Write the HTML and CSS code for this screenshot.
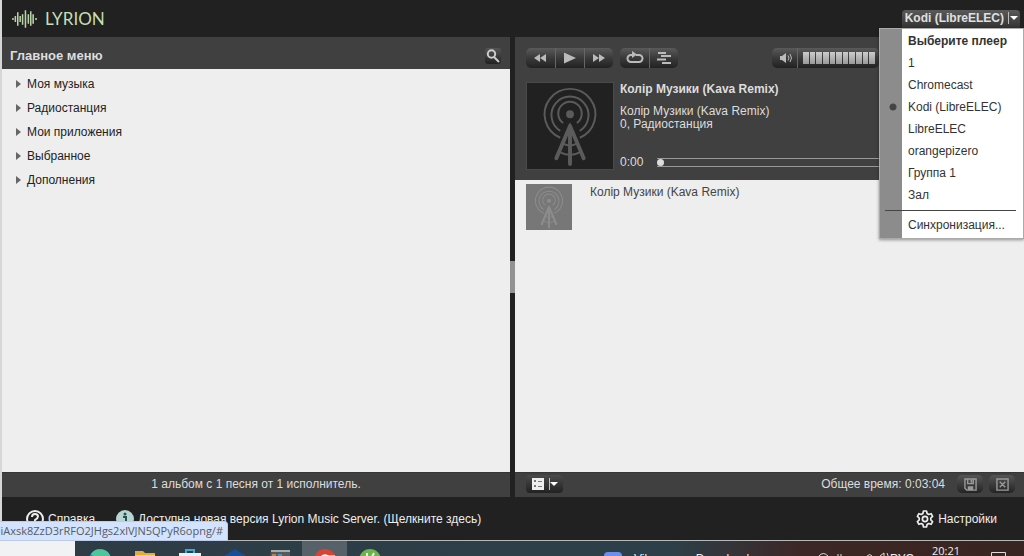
FILE: index.html
```html
<!DOCTYPE html>
<html lang="ru">
<head>
<meta charset="utf-8">
<title>Lyrion Music Server</title>
<link rel="stylesheet" href="styles.css">
</head>
<body>
<svg class="defs" aria-hidden="true">
  <symbol id="tower" viewBox="0 0 88 88">
    <g fill="none" stroke="currentColor">
      <g stroke-width="2">
        <path d="M37 41A12 12 0 1 1 51 41"/>
        <path d="M34 49A19 19 0 1 1 54 49"/>
        <path d="M34 56A26 26 0 1 1 54 56"/>
      </g>
      <path stroke-width="4" stroke-linecap="round" d="M44 44V83M44 44L30 77M44 44L58 77"/>
      <path stroke-width="2" d="M37 62Q44 66 51 62M34 71Q44 76 54 71"/>
    </g>
    <circle cx="44" cy="32" r="4" fill="currentColor"/>
    <path fill="currentColor" d="M44 40l5 13H39z"/>
  </symbol>
</svg>

<div class="app">
  <header class="topbar">
    <a class="brand" href="#">
      <svg class="brand-mark" viewBox="0 0 26 18" aria-hidden="true"><path d="M1 8v2M3.500 6v6M6 2v14M8.500 6v6M11 4v11M14 0v18M17 4v10M19.500 1v15M22 4v10M25 8v2"/></svg>
      <span>LYRION</span>
    </a>
    <div class="player-picker">
      <button class="player-button" type="button" aria-haspopup="true" aria-expanded="true">Kodi (LibreELEC)<span class="caret-box"><span class="caret"></span></span></button>
      <div class="menu" role="menu">
        <strong class="menu-title">Выберите плеер</strong>
        <button type="button" role="menuitem">1</button>
        <button type="button" role="menuitem">Chromecast</button>
        <button type="button" role="menuitem" class="checked">Kodi (LibreELEC)</button>
        <button type="button" role="menuitem">LibreELEC</button>
        <button type="button" role="menuitem">orangepizero</button>
        <button type="button" role="menuitem">Группа 1</button>
        <button type="button" role="menuitem">Зал</button>
        <hr class="menu-rule">
        <button type="button" role="menuitem">Синхронизация...</button>
      </div>
    </div>
  </header>

  <main class="panels">
    <section class="panel library">
      <div class="panel-head">
        <h1>Главное меню</h1>
        <button class="search-button" type="button" aria-label="Поиск"><svg viewBox="0 0 16 16"><circle cx="6.500" cy="6" r="3.700"/><path d="M9 9l5 5"/></svg></button>
      </div>
      <nav class="tree">
        <a href="#">Моя музыка</a>
        <a href="#">Радиостанция</a>
        <a href="#">Мои приложения</a>
        <a href="#">Выбранное</a>
        <a href="#">Дополнения</a>
      </nav>
      <div class="panel-foot summary">1 альбом с 1 песня от 1 исполнитель.</div>
    </section>

    <div class="splitter"><span class="grip"></span></div>

    <section class="panel player">
      <div class="now-playing">
        <div class="controls">
          <div class="group">
            <button type="button" aria-label="Назад"><svg viewBox="0 0 16 16"><path d="M7 4v8L1 8zM13 4v8L7 8z"/></svg></button>
            <button type="button" aria-label="Играть"><svg viewBox="0 0 16 16"><path d="M2 2.500L14 8 2 13.500z"/></svg></button>
            <button type="button" aria-label="Вперёд"><svg viewBox="0 0 16 16"><path d="M2 4v8l6-4zM8 4v8l6-4z"/></svg></button>
          </div>
          <div class="group">
            <button type="button" aria-label="Повтор"><svg class="wide" viewBox="0 0 18 14"><path class="line" d="M6 4H5a3.500 3.500 0 0 0 0 7h8a3.500 3.500 0 0 0 0-7h-3"/><path d="M6 0v7l5-3.500z"/></svg></button>
            <button type="button" aria-label="Случайный порядок"><svg class="wide" viewBox="0 0 18 14"><path class="line" d="M3 2h8M6 5h10M2 8.500h9M7 12h9"/></svg></button>
          </div>
          <div class="group volume">
            <button type="button" aria-label="Звук"><svg viewBox="0 0 16 16"><path d="M3 6h2l4-3v10L5 10H3z"/><path class="thin" d="M11 5.500q2 2.500 0 5M13 4q3 4 0 8"/></svg></button>
            <div class="bars"><i></i><i></i><i></i><i></i><i></i><i></i><i></i><i></i><i></i><i></i><i></i></div>
          </div>
        </div>
        <div class="track">
          <svg class="cover" role="img" aria-label="Обложка"><use href="#tower"/></svg>
          <div class="track-info">
            <h2>Колір Музики (Kava Remix)</h2>
            <p>Колір Музики (Kava Remix)<br>0, Радиостанция</p>
            <div class="progress">
              <span>0:00</span>
              <div class="rail"><span class="knob"></span></div>
            </div>
          </div>
        </div>
      </div>
      <div class="playlist">
        <svg class="thumb" role="img" aria-label="Обложка"><use href="#tower"/></svg>
        <span>Колір Музики (Kava Remix)</span>
      </div>
      <div class="panel-foot tools">
        <button class="view-button" type="button" aria-label="Вид"><svg viewBox="0 0 12 12"><path fill="#eee" d="M0 0h12v12H0z"/><path fill="#777" d="M2 2h2v2H2zM2 7h2v2H2zM6 3h4v1H6zM6 8h4v1H6z"/></svg><span class="caret-box"><span class="caret"></span></span></button>
        <span class="total">Общее время: 0:03:04</span>
        <button class="tool-button" type="button" aria-label="Сохранить"><svg viewBox="0 0 14 14"><path class="frame" d="M1 1h12v12H3L1 11z"/><path class="frame" d="M4 1v5h6V1"/><path class="solid" d="M4 9h6v4H4zM7 2h2v3H7z"/></svg></button>
        <button class="tool-button" type="button" aria-label="Очистить"><svg viewBox="0 0 14 14"><path class="frame" d="M1 1h12v12H1zM4 4l6 6M10 4l-6 6"/></svg></button>
      </div>
    </section>
  </main>

  <footer class="bottombar">
    <a href="#"><svg class="icon" viewBox="0 0 18 18"><circle cx="9" cy="9" r="8" fill="none" stroke="#eee" stroke-width="2"/><path d="M6 7q0-3 3-3t3 2.500Q12 8 9 10v1" fill="none" stroke="#eee" stroke-width="2"/><circle cx="9" cy="13.500" r="1" fill="#eee"/></svg>Справка</a>
    <a href="#"><svg class="icon" viewBox="0 0 18 18"><circle cx="9" cy="9" r="9" fill="#b7d5d2"/><path d="M7 7h3v6h2M6 13.500h6" fill="none" stroke="#26514f" stroke-width="2"/><circle cx="9" cy="4" r="1.500" fill="#26514f"/></svg>Доступна новая версия Lyrion Music Server. (Щелкните здесь)</a>
    <a class="settings" href="#"><svg class="icon" viewBox="0 0 18 18" fill="none" stroke="#eee" stroke-width="1.700" stroke-linejoin="round"><path d="M7.500 1h3l.6 2.500 1.600 1 2.400-.8 1.500 2.600L14.800 8v2l1.800 1.700-1.500 2.600-2.400-.8-1.600 1-.6 2.500h-3l-.6-2.500-1.600-1-2.400.8-1.500-2.600L3.200 10V8L1.400 6.300l1.500-2.600 2.400.8 1.600-1z"/><circle cx="9" cy="9" r="2.600"/></svg>Настройки</a>
    <div class="link-hint">6liAxsk8ZzD3rRFO2JHgs2xlVJN5QPyR6opng/#</div>
  </footer>
</div>

<div class="taskbar">
  <div class="task-search"></div>
  <div class="apps">
    <span class="app-slot"><svg viewBox="0 0 22 22"><circle cx="11" cy="11" r="11" fill="#238dce"/><path d="M2 5a11 11 0 0 1 20 5q-1 4-6 3Q15 6 8 7 4 8 2 5z" fill="#50c59a"/></svg></span>
    <span class="app-slot"><svg viewBox="0 0 22 22"><path d="M1 2h8l2 2h10v16H1z" fill="#e2aa43"/><path d="M1 6h20v14H1z" fill="#f4cf6b"/></svg></span>
    <span class="app-slot"><svg viewBox="0 0 22 22"><path d="M7 5V1h8v4" fill="none" stroke="#40a6d8" stroke-width="2"/><path d="M0 4h22v16H0z" fill="#e9f1f5"/><path d="M7 7h3v3H7zM12 7h3v3h-3z" fill="#2b86c5"/></svg></span>
    <span class="app-slot"><svg viewBox="0 0 22 22"><path d="M11 0l11 7v14H0V7z" fill="#174f96"/></svg></span>
    <span class="app-slot"><svg viewBox="0 0 22 22"><path d="M2 1h19v20H0z" fill="#555b5d"/><path d="M2 1h19v2H2z" fill="#a6abac"/><path d="M3 5h4v2H3z" fill="#b88243"/><path d="M9 5h4v2H9z" fill="#578eb4"/></svg></span>
    <span class="app-slot active"><svg viewBox="0 0 22 22"><circle cx="11" cy="11" r="11" fill="#d94335"/><path d="M11 6h10q2 8-6 12z" fill="#f4be43"/><circle cx="11" cy="11" r="5" fill="#4b82d8" stroke="#fff" stroke-width="1.500"/></svg></span>
    <span class="app-slot"><svg viewBox="0 0 22 22"><circle cx="11" cy="11" r="11" fill="#6db34e"/><path d="M8 4v6M15 4l-3 6" stroke="#eee" stroke-width="2"/></svg></span>
  </div>
  <div class="task-window"><svg viewBox="0 0 18 18"><rect width="18" height="18" rx="4" fill="#6b8fea"/></svg><span>Viber</span><span>Download</span></div>
  <div class="tray">
    <svg viewBox="0 0 80 16" fill="none" stroke="#ddd" aria-hidden="true"><path d="M1 6q4-5 9 0M20 4v3M23 4v3M49 6q3-3 5 0M62 6l4-3v8M69 3q3 4 0 8"/></svg>
    <span class="lang">РУС</span>
    <time>20:21</time>
    <svg class="notice" viewBox="0 0 15 15" fill="none" stroke="#ddd"><path d="M.5.5h14v12H.5z"/></svg>
  </div>
</div>
</body>
</html>
```
FILE: styles.css
```css
* { box-sizing: border-box; }
body {
  margin: 0;
  height: 100vh;
  display: flex;
  flex-direction: column;
  overflow: hidden;
  background: #212121;
  font-family: "Liberation Sans", Arial, sans-serif;
  font-size: 12px;
  line-height: 14px;
  color: #222;
}
button {
  font: inherit;
  color: inherit;
  margin: 0;
  padding: 0;
  border: 0;
  background: none;
}
a { color: inherit; text-decoration: none; }
h1, h2, p { margin: 0; }
svg { display: block; flex: none; }
.defs { position: absolute; width: 0; height: 0; }

.app {
  flex: 1;
  min-height: 0;
  display: flex;
  flex-direction: column;
  border-left: 2px solid #d6d8d8;
}

.topbar {
  flex: none;
  height: 37px;
  display: flex;
  justify-content: space-between;
  align-items: center;
  padding: 0 4px 0 10px;
}
.brand {
  display: flex;
  align-items: center;
  gap: 8px;
  color: #c5dfb5;
  font-family: Lato, sans-serif;
  font-size: 17px;
  line-height: 20px;
}
.brand-mark {
  width: 25px;
  height: 18px;
  fill: none;
  stroke: #b9d3a9;
  stroke-width: 1.600;
}
.player-picker { position: relative; }
.player-button {
  display: flex;
  align-items: center;
  height: 18px;
  padding: 0 2px 2px 3px;
  border-radius: 4px 4px 0 0;
  background: linear-gradient(#5a5a5a, #333);
  color: #e0e0e0;
  font-weight: bold;
}
.caret-box {
  display: flex;
  align-items: center;
  height: 12px;
  margin-left: 4px;
  padding-left: 1px;
  border-left: 1px solid #bbb;
}
.caret {
  border: 4px solid transparent;
  border-top-color: #fff;
  border-bottom: 0;
}
.menu {
  position: absolute;
  z-index: 2;
  top: 18px;
  right: -4px;
  width: 145px;
  padding: 1px 0 2px;
  display: flex;
  flex-direction: column;
  background: linear-gradient(90deg, #8c8c8c 22px, #fff 22px);
  border: 1px solid #aaa;
  box-shadow: 0 1px 3px #0006;
  color: #333;
}
.menu button, .menu-title {
  height: 22px;
  padding-left: 28px;
  line-height: 22px;
  text-align: left;
}
.menu .checked {
  background: radial-gradient(circle at 13px 11px, #444 3px, transparent 4px);
}
.menu-rule {
  width: calc(100% - 12px);
  margin: 4px 5px 3px;
  border: 0;
  border-top: 1px solid #444;
}

.panels {
  flex: 1;
  min-height: 0;
  display: grid;
  grid-template-columns: minmax(0, 508fr) 5px minmax(0, 509fr);
}
.panel { display: flex; flex-direction: column; background: #eee; }
.panel-head {
  flex: none;
  height: 32px;
  display: flex;
  justify-content: space-between;
  align-items: center;
  padding: 5px 9px 0 8px;
  background: #404040;
  color: #ddd;
}
.panel-head h1 { font-size: 13px; line-height: 16px; }
.search-button {
  width: 16px;
  height: 16px;
  border-radius: 3px;
  background: linear-gradient(#555, #222);
}
.search-button svg { fill: none; stroke: #ccc; stroke-width: 2; }
.tree { flex: 1; padding-top: 3px; }
.tree a {
  display: flex;
  align-items: center;
  gap: 6px;
  height: 24px;
  padding-left: 14px;
}
.tree a::before {
  content: "";
  border: 4px solid transparent;
  border-left: 5px solid #666;
  border-right: 0;
}
.panel-foot {
  flex: none;
  height: 25px;
  display: flex;
  align-items: center;
  background: #404040;
  border-top: 1px solid #363636;
  color: #ddd;
}
.summary { justify-content: center; padding-bottom: 2px; }

.splitter { display: flex; align-items: center; background: #212121; }
.grip { width: 5px; height: 32px; margin-top: 20px; background: #929292; }

.now-playing {
  flex: none;
  height: 143px;
  padding: 11px 0 0 11px;
  overflow: hidden;
  background: #404040;
  color: #ddd;
}
.controls { display: flex; gap: 7px; height: 20px; }
.group {
  display: flex;
  border-radius: 5px;
  background: linear-gradient(#5a5a5a, #3a3a3a 50%, #222);
}
.group button {
  width: 29px;
  display: flex;
  align-items: center;
  justify-content: center;
}
.group button + button { border-left: 1px solid #666; }
.group svg { width: 16px; height: 16px; fill: #bbb; }
.group .wide { width: 18px; height: 14px; }
.group .line { fill: none; stroke: #bbb; stroke-width: 2; }
.group .thin { fill: none; stroke: #bbb; }
.volume { margin-left: auto; margin-right: 145px; }
.volume button { width: 26px; border-right: 1px solid #666; }
.bars { display: flex; gap: 1px; width: 81px; padding: 4px 4px 4px 5px; }
.bars i { flex: 1; height: 12px; background: linear-gradient(#ccc, #999); }

.track { display: flex; gap: 6px; padding-top: 14px; }
.cover {
  width: 88px;
  height: 88px;
  border: 1px solid #4a4a4a;
  background: #212121;
  color: #5b5b5b;
}
.track-info { flex: 1; }
.track-info h2 { font-size: 12px; line-height: 14px; margin-bottom: 9px; }
.track-info p { line-height: 13px; }
.progress { display: flex; align-items: center; gap: 14px; padding-top: 24px; }
.rail {
  flex: 1;
  height: 9px;
  display: flex;
  align-items: center;
  border: 1px solid #999;
  border-width: 1px 0;
}
.knob {
  width: 7px;
  height: 7px;
  border-radius: 4px;
  background: #ddd;
}
.playlist {
  flex: 1;
  display: flex;
  align-items: flex-start;
  gap: 18px;
  padding: 4px 11px;
  color: #444;
}
.thumb { width: 46px; height: 46px; background: #777; color: #8c8c8c; }
.playlist span { padding-top: 1px; }

.tools { gap: 6px; padding: 0 9px 2px 11px; }
.view-button {
  display: flex;
  align-items: center;
  height: 18px;
  padding: 0 5px 0 6px;
  border-radius: 4px;
  background: linear-gradient(#4a4a4a, #222);
}
.view-button svg { width: 12px; height: 12px; }
.view-button .caret-box { margin-left: 5px; padding-left: 0; }
.total { margin-left: auto; margin-right: 6px; }
.tool-button {
  width: 26px;
  height: 18px;
  display: flex;
  align-items: center;
  justify-content: center;
  border-radius: 5px;
  background: linear-gradient(#555, #242424);
}
.tool-button svg { width: 13px; height: 13px; }
.frame { fill: none; stroke: #999; stroke-width: 1.500; }
.solid { fill: #999; }

.bottombar {
  position: relative;
  flex: none;
  height: 43px;
  display: flex;
  align-items: center;
  gap: 21px;
  padding: 0 27px 0 24px;
  color: #eee;
}
.bottombar a { display: flex; align-items: center; gap: 4px; }
.bottombar .settings { margin-left: auto; }
.icon { width: 18px; height: 18px; }
.link-hint {
  position: absolute;
  left: -2px;
  bottom: -1px;
  width: 228px;
  height: 20px;
  padding-right: 4px;
  display: flex;
  justify-content: flex-end;
  align-items: center;
  overflow: hidden;
  border: 1px solid #bccbe9;
  border-left: 0;
  border-radius: 0 4px 0 0;
  background: #d3e3fd;
  color: #555b66;
  font-family: "Open Sans", sans-serif;
  font-size: 11px;
  white-space: nowrap;
}

.taskbar {
  flex: none;
  height: 16px;
  display: flex;
  overflow: hidden;
  border-top: 1px solid #b5b9ba;
  background: linear-gradient(90deg, #2e3b44, #2d404a 65%, #3d2726 78%, #382420);
  color: #eee;
}
.task-search { flex: none; width: 75px; height: 16px; background: #f1f2f3; }
.apps { display: flex; margin-left: 2px; }
.app-slot { width: 45px; height: 16px; padding-top: 8px; overflow: hidden; }
.app-slot svg { width: 22px; height: 22px; margin: 0 auto; }
.app-slot.active { background: #566169; }
.task-window { display: flex; flex: 1; align-items: flex-start; gap: 12px; margin-left: 212px; padding-top: 11px; }
.task-window svg { width: 18px; height: 18px; }
.task-window span + span { margin-left: 22px; }
.tray { display: flex; align-items: flex-start; margin-right: 18px; }
.tray > svg { width: 80px; height: 16px; margin-top: 9px; }
.lang { margin: 11px 18px 0 -8px; }
.tray time { margin-top: 3px; font-family: "Open Sans", sans-serif; font-size: 11px; }
.tray .notice { width: 15px; height: 15px; margin: 11px 0 0 31px; }
```
